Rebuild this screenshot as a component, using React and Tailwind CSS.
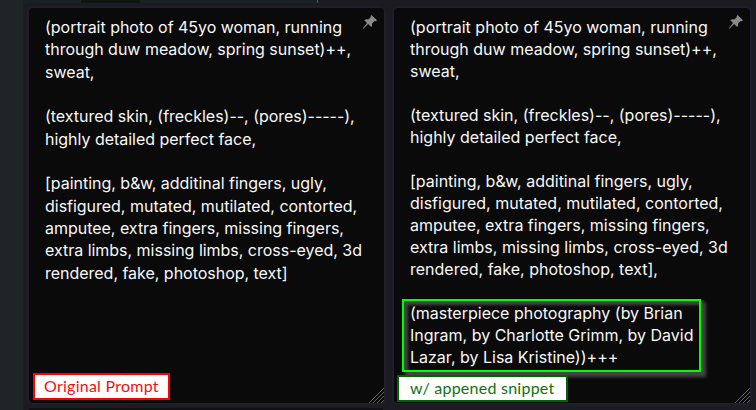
const BASE_PROMPT = [
  '(portrait photo of 45yo woman, running',
  'through duw meadow, spring sunset)++,',
  'sweat,',
  '',
  '(textured skin, (freckles)--, (pores)-----),',
  'highly detailed perfect face,',
  '',
  '[painting, b&w, additinal fingers, ugly,',
  'disfigured, mutated, mutilated, contorted,',
  'amputee, extra fingers, missing fingers,',
  'extra limbs, missing limbs, cross-eyed, 3d',
];

const SNIPPET = [
  '(masterpiece photography (by Brian',
  'Ingram, by Charlotte Grimm, by David',
  'Lazar, by Lisa Kristine))+++',
];

function Pin() {
  return (
    <svg className="absolute right-1.5 top-1.5 h-4 w-4" viewBox="0 0 16 16" fill="#8a8a8a">
      <path d="M9.5 1 15 6.3 13.8 7.2 12.6 7 10.1 9.5Q10.5 11.6 9.2 13L6.1 10 1.2 15 .8 14.6 5 9 2.3 6.2Q4 4.8 6.3 5.5L8.9 3 8.6 1.9Z" />
    </svg>
  );
}

function ResizeHandle() {
  return (
    <svg className="absolute bottom-0 right-0 h-[15px] w-[15px]" viewBox="0 0 15 15" stroke="#77777a" strokeWidth="0.8">
      <path d="M0 15 15 0M4 15 15 4M8 15 15 8M12 15 15 12" />
    </svg>
  );
}

function Lines({ lines }) {
  return lines.map((line, i) => (
    <span key={i} className="block whitespace-pre">
      {line || ' '}
    </span>
  ));
}

export default function App() {
  return (
    <div className="flex h-[410px] w-[756px] overflow-hidden bg-[#1c1b22] font-['Inter',sans-serif] text-[16px] text-[#f8f8f8]">
      <div className="w-[23px] shrink-0 bg-[#1f2427]" />
      <div className="flex min-w-0 flex-1 flex-col">
        <div className="flex h-[3px] w-[295px] bg-[#1a2023]">
          <div className="ml-[58px] w-[59px] bg-[#101415]" />
          <div className="ml-auto w-px bg-[#55585b]" />
        </div>

        <div className="flex gap-1.5 pl-1 pt-[3px]">
          <div className="relative flex h-[399px] w-[359px] shrink-0 flex-col rounded-[6px] border-2 border-[#201d2d] bg-[#0a0a0a]">
            <div className="flex-1 pl-4 pt-2 leading-[22.33px] tracking-[-0.02px]">
              <Lines lines={[...BASE_PROMPT, 'rendered, fake, photoshop, text]']} />
            </div>
            <div className="mb-[3px] ml-1 flex h-[27px] w-[137px] items-center border-2 border-[#ff0000] bg-white pb-px pl-[9px] font-['Lato',sans-serif] text-[16px] leading-none tracking-[0.25px] text-[#f01010]">
              <span className="whitespace-nowrap">Original Prompt</span>
            </div>
            <Pin />
            <ResizeHandle />
          </div>

          <div className="relative flex h-[399px] w-[360px] shrink-0 flex-col rounded-[6px] border-2 border-[#201d2d] bg-[#0a0a0a]">
            <div className="pl-4 pt-2 leading-[22px]">
              <Lines lines={[...BASE_PROMPT, 'rendered, fake, photoshop, text],']} />
            </div>
            <div className="ml-2 mt-[19px] h-[73px] w-[299px] border-2 border-[#00ff00] pl-1.5 pt-px leading-[22px] shadow-[4px_4px_3px_1px_#454545,inset_4px_4px_3px_0px_#454545]">
              <Lines lines={SNIPPET} />
            </div>
            <div className="relative ml-[3px] mt-[3px] flex h-[27px] w-[171px] items-center border-2 border-[#006400] bg-white pb-px pl-[11px] font-['Lato',sans-serif] text-[16px] leading-none tracking-[0.25px] text-[#107010]">
              <span className="whitespace-nowrap">w/ appened snippet</span>
            </div>
            <Pin />
            <ResizeHandle />
          </div>
        </div>
        <div className="ml-1.5 mt-[3px] h-[2px] w-[354px] bg-[#111114]" />
      </div>
    </div>
  );
}
